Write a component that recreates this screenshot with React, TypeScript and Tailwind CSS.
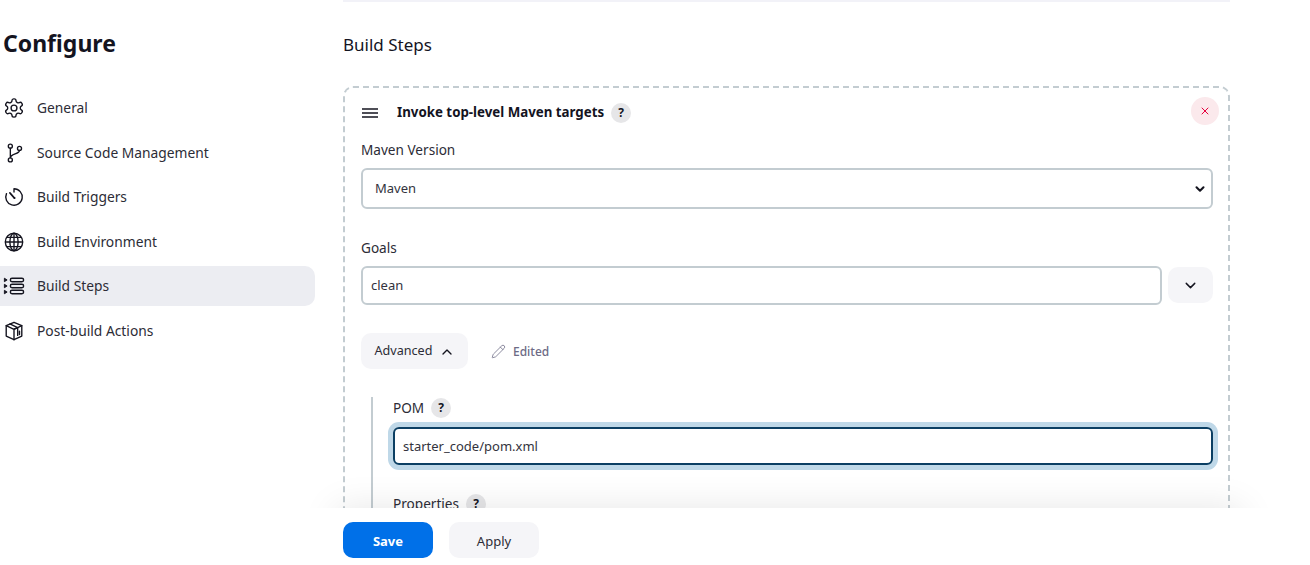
import React from "react";
import { ChevronDown, ChevronUp, Pencil, X } from "lucide-react";

const font = "font-['Noto_Sans','Open_Sans',sans-serif]";

function GearIcon() {
  return (
    <svg viewBox="0 0 24 24" className="h-[22px] w-[22px]" fill="none" stroke="#14141f" strokeWidth="1.5" strokeLinecap="round" strokeLinejoin="round">
      <path d="M12.22 2h-.44a2 2 0 0 0-2 2v.18a2 2 0 0 1-1 1.73l-.43.25a2 2 0 0 1-2 0l-.15-.08a2 2 0 0 0-2.73.73l-.22.38a2 2 0 0 0 .73 2.73l.15.1a2 2 0 0 1 1 1.72v.51a2 2 0 0 1-1 1.74l-.15.09a2 2 0 0 0-.73 2.73l.22.38a2 2 0 0 0 2.73.73l.15-.08a2 2 0 0 1 2 0l.43.25a2 2 0 0 1 1 1.73V20a2 2 0 0 0 2 2h.44a2 2 0 0 0 2-2v-.18a2 2 0 0 1 1-1.73l.43-.25a2 2 0 0 1 2 0l.15.08a2 2 0 0 0 2.73-.73l.22-.39a2 2 0 0 0-.73-2.73l-.15-.08a2 2 0 0 1-1-1.74v-.5a2 2 0 0 1 1-1.74l.15-.09a2 2 0 0 0 .73-2.73l-.22-.38a2 2 0 0 0-2.73-.73l-.15.08a2 2 0 0 1-2 0l-.43-.25a2 2 0 0 1-1-1.73V4a2 2 0 0 0-2-2z" />
      <circle cx="12" cy="12" r="3.2" />
    </svg>
  );
}

function BranchIcon() {
  return (
    <svg viewBox="0 0 24 24" className="h-[22px] w-[22px]" fill="none" stroke="#14141f" strokeWidth="1.5" strokeLinecap="round">
      <circle cx="8" cy="4.5" r="2.2" />
      <circle cx="8" cy="19.5" r="2.2" />
      <circle cx="18" cy="7" r="2.2" />
      <path d="M8 6.7v10.6M18 9.2c0 4-10 3.5-10 8" />
    </svg>
  );
}

function TimerIcon() {
  return (
    <svg viewBox="0 0 24 24" className="h-[22px] w-[22px]" fill="none" stroke="#14141f" strokeWidth="1.5" strokeLinecap="round" strokeLinejoin="round">
      <path d="M12 3a9 9 0 1 1-8.200 5.300M12 3v3.500" />
      <path d="M7.500 7.500l5 5.700" strokeWidth="1.800" />
      <circle cx="12.600" cy="13" r="1" fill="#14141f" stroke="none" />
    </svg>
  );
}

function GlobeIcon() {
  return (
    <svg viewBox="0 0 24 24" className="h-[22px] w-[22px]" fill="none" stroke="#14141f" strokeWidth="1.500">
      <circle cx="12" cy="12" r="9.500" />
      <ellipse cx="12" cy="12" rx="4.500" ry="9.500" />
      <path d="M12 2.500v19M2.500 12h19M4 7h16M4 17h16" />
    </svg>
  );
}

function StepsIcon() {
  return (
    <svg viewBox="0 0 24 24" className="h-[22px] w-[22px]" fill="none" stroke="#14141f" strokeWidth="1.500">
      <rect x="8" y="3.500" width="14.500" height="3.800" rx="1.900" />
      <rect x="8" y="10.100" width="14.500" height="3.800" rx="1.900" />
      <rect x="8" y="16.700" width="14.500" height="3.800" rx="1.900" />
      <path d="M1.500 3.500l3 1.900-3 1.900zM1.500 10.100l3 1.900-3 1.900zM1.500 16.700l3 1.900-3 1.900z" fill="#14141f" strokeWidth="1" strokeLinejoin="round" />
    </svg>
  );
}

function BoxIcon() {
  return (
    <svg viewBox="0 0 24 24" className="h-[22px] w-[22px]" fill="none" stroke="#14141f" strokeWidth="1.500" strokeLinejoin="round" strokeLinecap="round">
      <path d="M12 2.500l8.500 3.600v11.400L12 21.500l-8.500-4V6.100z" />
      <path d="M3.500 6.100l8.500 4 8.500-4M12 10.100v11.400" />
      <path d="M7.500 4.300l8.500 4v4.400M16 8.300l-3.500 1.500" />
      <path d="M16 13v3.800M18 12.300v3.500" />
    </svg>
  );
}

function DragHandle() {
  return (
    <svg viewBox="0 0 16 10" className="h-[10px] w-[16px]" fill="none" stroke="#14141f" strokeWidth="1.500">
      <path d="M0 1h16M0 5h16M0 9h16" />
    </svg>
  );
}

const navItems = [
  { label: "General", icon: <GearIcon /> },
  { label: "Source Code Management", icon: <BranchIcon /> },
  { label: "Build Triggers", icon: <TimerIcon /> },
  { label: "Build Environment", icon: <GlobeIcon /> },
  { label: "Build Steps", icon: <StepsIcon />, active: true },
  { label: "Post-build Actions", icon: <BoxIcon /> },
];

function HelpBadge() {
  return (
    <span className="flex h-5 w-5 items-center justify-center rounded-full bg-[#e6e6e8] text-xs font-bold text-[#14141f]">
      ?
    </span>
  );
}

function Sidebar() {
  return (
    <aside className="w-[315px] shrink-0 pt-[24px]">
      <h1 className="pl-[3px] text-[23px] leading-[38px] font-bold text-[#14141f]">Configure</h1>
      <nav className="mt-[26px] flex flex-col">
        {navItems.map((item) => (
          <div
            key={item.label}
            className={
              "mb-[4.500px] flex h-[40px] items-center gap-[12px] rounded-r-[10px] pl-[3px] text-[13.800px] text-[#2c2c36] " +
              (item.active ? "bg-[#ecedf2]" : "")
            }
          >
            {item.icon}
            <span className="pt-[1px]">{item.label}</span>
          </div>
        ))}
      </nav>
    </aside>
  );
}

function BuildStepCard() {
  return (
    <section className="relative mt-[29px] h-[500px] rounded-[10px] border-2 border-dashed border-[#c3ccd1] px-[16px] pt-[15px] pr-[15px]">
      <button className="absolute top-[9px] right-[9px] flex h-[28px] w-[28px] items-center justify-center rounded-full bg-[#fbe9ec]">
        <X className="h-3 w-3 text-[#e6003c]" strokeWidth={2} />
      </button>

      <div className="flex h-[20px] items-center">
        <span className="ml-[1px]">
          <DragHandle />
        </span>
        <span className="ml-[19px] text-[13.300px] font-bold text-[#14141f]">Invoke top-level Maven targets</span>
        <span className="ml-[7px]">
          <HelpBadge />
        </span>
      </div>

      <label className="mt-[17px] block text-[13.600px] leading-[20px] text-[#2c2c36]">Maven Version</label>
      <div className="mt-[8px] flex h-[41px] items-center justify-between rounded-[6px] border-2 border-[#c3ccd1] pr-[4px] pl-[12px] text-[13px] text-[#33333d]">
        <span className="pt-[1px]">Maven</span>
        <ChevronDown className="h-[14px] w-[14px] text-[#14141f]" strokeWidth={3.500} />
      </div>

      <label className="mt-[29px] block text-[13.600px] leading-[20px] text-[#2c2c36]">Goals</label>
      <div className="mt-[8px] flex items-start gap-[6px]">
        <div className="flex h-[39px] flex-1 items-center rounded-[6px] border-2 border-[#c3ccd1] pt-[1px] pl-[8px] text-[13px] text-[#33333d]">
          clean
        </div>
        <button className="mt-[1px] flex h-[36px] w-[45px] items-center justify-center rounded-[10px] bg-[#f5f5f8]">
          <ChevronDown className="h-[17px] w-[17px] text-[#14141f]" strokeWidth={2} />
        </button>
      </div>

      <div className="mt-[28px] flex items-center">
        <button className="flex h-[36px] w-[107px] items-center justify-center gap-[7px] rounded-[10px] bg-[#f5f5f8] pt-[1px] pl-[1px] text-[12.600px] text-[#2c2c36]">
          Advanced
          <ChevronUp className="h-[16px] w-[16px] text-[#14141f]" strokeWidth={2} />
        </button>
        <span className="ml-[23px] flex items-center gap-[7px] pt-[1px] text-xs font-medium text-[#6d6b85]">
          <Pencil className="h-[15px] w-[15px]" strokeWidth={1.250} />
          Edited
        </span>
      </div>

      <div className="mt-[28px] ml-[10px] border-l-2 border-[#c3ccd1] pt-[1px] pl-[20px]">
        <div className="flex h-[20px] items-center gap-[7px]">
          <label className="text-[13.600px] text-[#2c2c36]">POM</label>
          <HelpBadge />
        </div>
        <div className="mt-[9px] flex h-[38px] items-center rounded-[6px] border-2 border-[#0b3f63] pt-[1px] pl-[8px] text-[13px] text-[#33333d] shadow-[0_0_0_5px_#bfd8e8]">
          starter_code/pom.xml
        </div>
        <div className="mt-[29px] flex h-[20px] items-center gap-[7px]">
          <label className="text-[13.600px] text-[#2c2c36]">Properties</label>
          <HelpBadge />
        </div>
      </div>
    </section>
  );
}

export default function App() {
  return (
    <div className={"relative h-[565px] w-[1310px] overflow-hidden bg-white " + font}>
      <div className="flex">
        <Sidebar />
        <main className="ml-[28px] w-[887px] shrink-0">
          <div className="h-[2px] bg-[#f2f2f8]" />
          <h2 className="mt-[31px] text-[17px] leading-[24px] text-[#14141f]">Build Steps</h2>
          <BuildStepCard />
        </main>
      </div>

      {/* sticky save bar, the shadow only shows above the white strip */}
      <div className="absolute top-[508px] left-[336px] h-[57px] w-[906px] shadow-[0_0_36px_rgba(0,0,0,0.1)]" />
      <div className="absolute top-[508px] left-0 flex h-[57px] w-full gap-[16px] bg-white pt-[14px] pl-[343px]">
        <button className="h-[36px] w-[90px] rounded-[10px] bg-[#0070e8] pt-[3px] text-[13px] font-bold text-white">Save</button>
        <button className="h-[36px] w-[90px] rounded-[10px] bg-[#f5f5f8] pt-[3px] text-[13px] text-[#2c2c36]">Apply</button>
      </div>
    </div>
  );
}
